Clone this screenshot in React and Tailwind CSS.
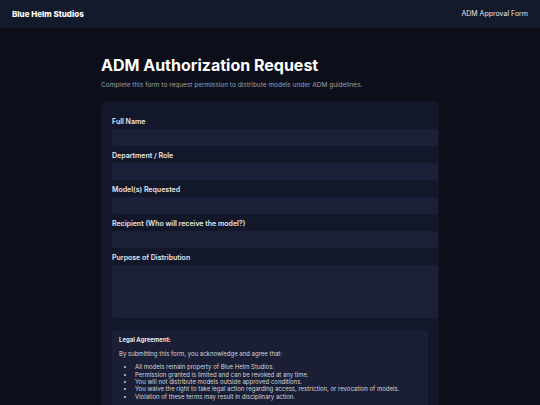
import React from 'react';

const fields = [
  'Full Name',
  'Department / Role',
  'Model(s) Requested',
  'Recipient (Who will receive the model?)',
];

const terms = [
  'All models remain property of Blue Helm Studios.',
  'Permission granted is limited and can be revoked at any time.',
  'You will not distribute models outside approved conditions.',
  'You waive the right to take legal action regarding access, restriction, or revocation of models.',
  'Violation of these terms may result in disciplinary action.',
];

export default function App() {
  return (
    <div className="min-h-screen bg-[#0c0f1a] text-gray-100" style={{ fontFamily: 'Inter, "Noto Sans", sans-serif' }}>
      {/* Top bar */}
      <header className="flex h-[28px] items-center justify-between bg-[#131a2b] px-3">
        <span className="text-[8px] font-extrabold text-white">Blue Helm Studios</span>
        <span className="text-[7px] text-gray-200">ADM Approval Form</span>
      </header>

      <main className="mx-auto w-[338px] pt-[27px]">
        <h1 className="text-[16px] font-bold leading-[21px] text-white">ADM Authorization Request</h1>
        <p className="mt-[5px] text-[6.5px] text-gray-400">
          Complete this form to request permission to distribute models under ADM guidelines.
        </p>

        <div className="mt-[10px] rounded-[5px] bg-[#121729] px-[11px] pb-4 pt-[17px]">
          <form className="flex flex-col">
            {fields.map((f) => (
              <div key={f} className="mb-[6px]">
                <label className="block text-[7px] font-semibold leading-[8px] text-gray-200">{f}</label>
                <input type="text" className="mt-[3px] block h-[17px] w-[326px] rounded-[3px] bg-[#1b1f38] outline-none" />
              </div>
            ))}
            <div className="mb-[12px]">
              <label className="block text-[7px] font-semibold leading-[8px] text-gray-200">Purpose of Distribution</label>
              <textarea className="mt-[3px] block h-[53px] w-[326px] resize-y rounded-[3px] bg-[#1b1f38] outline-none [&::-webkit-resizer]:opacity-30" />
            </div>

            {/* Legal */}
            <div className="rounded-[4px] bg-[#1a1f36] px-[7px] pb-3 pt-[6px] text-[6px] leading-[7.3px] text-gray-300">
              <p className="font-bold text-gray-200">Legal Agreement:</p>
              <p className="mt-[7px]">By submitting this form, you acknowledge and agree that:</p>
              <ul className="mt-[6px] list-disc pl-[16px]">
                {terms.map((t) => (
                  <li key={t}>{t}</li>
                ))}
              </ul>
            </div>
          </form>
        </div>
      </main>
    </div>
  );
}
